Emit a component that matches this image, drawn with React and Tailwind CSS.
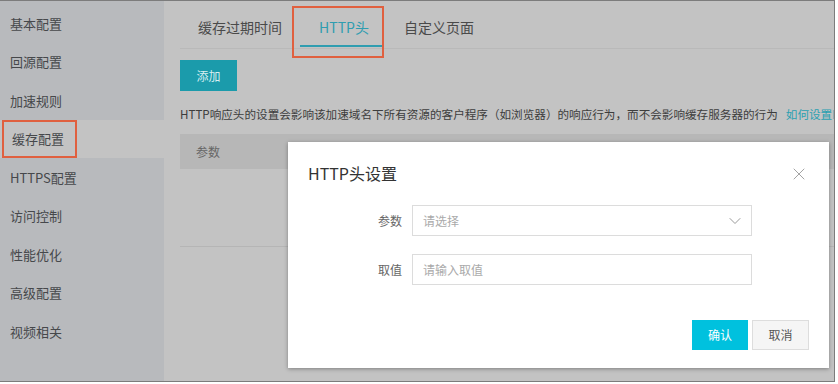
import React from "react";
import { X, ChevronDown } from "lucide-react";

const menu = ["基本配置", "回源配置", "加速规则", "缓存配置", "HTTPS配置", "访问控制", "性能优化", "高级配置", "视频相关"];

const font = { fontFamily: '"Noto Sans CJK SC", "Noto Sans", sans-serif' };

export default function App() {
  return (
    <div className="w-[838px] h-[384px] bg-white" style={font}>
      <div className="relative w-[835px] h-[382px] flex border-t border-r border-b border-[#7c7c7c] overflow-hidden">
        {/* sidebar */}
        <div className="w-[164px] shrink-0 bg-[#b8babd] pt-[3px]">
          {menu.map((m) => (
            <div
              key={m}
              className={`h-[38.5px] flex items-center pl-[10px] text-[13px] text-[#46484b] ${m === "缓存配置" ? "bg-[#c3c3c3]" : ""}`}
            >
              {m === "缓存配置" ? (
                <span className="-ml-[8px] h-[38px] w-[75px] flex items-center pl-[8px] border-2 border-[#e0603f]">{m}</span>
              ) : (
                m
              )}
            </div>
          ))}
        </div>

        {/* main */}
        <div className="flex-1 bg-[#c3c3c3] pl-[16px]">
          <div className="flex items-end h-[48px] border-b border-[#b9b9b9] text-[14px] text-[#4a4a4a]">
            <div className="w-[112px] flex justify-center items-center h-[42px] pl-[8px]">缓存过期时间</div>
            <div className="relative w-[92px] h-[52px] -mb-[10px] border-2 border-[#e0603f] flex flex-col">
              <div className="flex-1 flex items-center justify-center text-[#2f9db0] pt-[2px] pl-[12px]">HTTP头</div>
              <div className="h-[2px] bg-[#2f9db0] ml-[6px] mb-[9px]"></div>
            </div>
            <div className="w-[110px] flex justify-center items-center h-[42px]">自定义页面</div>
          </div>

          <div className="mt-[11px] w-[57px] h-[31px] bg-[#1b9bab] text-[#d8eef1] text-[12px] flex items-center justify-center">添加</div>

          <div className="mt-[15px] text-[11.6px] text-[#3d3d3d] whitespace-nowrap">
            HTTP响应头的设置会影响该加速域名下所有资源的客户程序（如浏览器）的响应行为，而不会影响缓存服务器的行为
            <span className="ml-[8px] text-[#2aa0b1]">如何设置H</span>
          </div>

          <div className="mt-[11px] h-[35px] bg-[#b7b7b7] flex items-center pl-[16px] text-[12px] text-[#666]">参数</div>
          <div className="h-[78px] border-b border-[#b5b5b5]"></div>
        </div>

        {/* dialog */}
        <div className="absolute left-[288px] top-[141px] w-[541px] h-[226px] bg-white shadow-[0_1px_4px_rgba(0,0,0,0.35)]">
          <div className="flex items-center justify-between pl-[20px] pr-[20px] pt-[19px]">
            <div className="text-[16px] text-[#333]">HTTP头设置</div>
            <X className="w-[20px] h-[20px] text-[#9a9a9a] mt-[2px]" strokeWidth={1.1} />
          </div>
          <div className="mt-[20px] flex flex-col gap-[18px] pl-[74px]">
            <div className="flex items-center">
              <div className="w-[40px] text-right text-[12px] text-[#666]">参数</div>
              <div className="ml-[10px] w-[340px] h-[31px] border border-[#dcdcdc] flex items-center justify-between pl-[10px] pr-[6px] text-[12px] text-[#aaa]">
                请选择
                <ChevronDown className="w-[20px] h-[20px] text-[#9a9a9a]" strokeWidth={1.2} />
              </div>
            </div>
            <div className="flex items-center">
              <div className="w-[40px] text-right text-[12px] text-[#666]">取值</div>
              <div className="ml-[10px] w-[340px] h-[31px] border border-[#dcdcdc] flex items-center pl-[10px] text-[12px] text-[#aaa]">
                请输入取值
              </div>
            </div>
          </div>
          <div className="mt-[35px] flex justify-end gap-[4px] pr-[20px]">
            <div className="w-[56px] h-[30px] bg-[#00c1de] text-white text-[12px] flex items-center justify-center">确认</div>
            <div className="w-[57px] h-[30px] bg-[#f5f5f5] border border-[#ddd] text-[#555] text-[12px] flex items-center justify-center">取消</div>
          </div>
        </div>
      </div>
    </div>
  );
}
